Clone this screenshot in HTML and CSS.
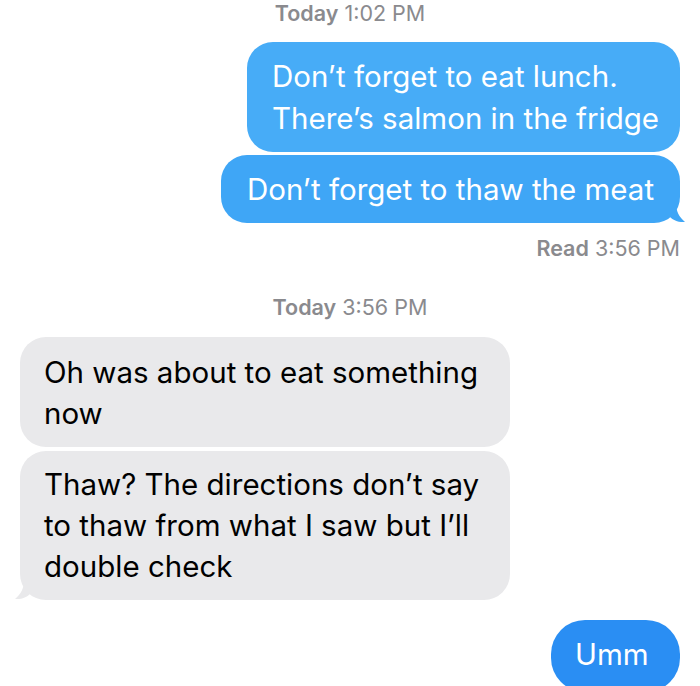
FILE: index.html
```html
<!DOCTYPE html>
<html>
<head>
<meta charset="utf-8">
<link rel="stylesheet" href="styles.css">
</head>
<body>
<div class="thread">
  <div class="stamp stamp-top"><b>Today</b> 1:02 PM</div>

  <div class="bubble out out-1">Don’t forget to eat lunch.<br>There’s salmon in the fridge</div>
  <div class="bubble out out-2">Don’t forget to thaw the meat
    <svg class="tail tail-out" width="20" height="20" viewBox="0 0 20 20"><path d="M0 0 L6 0 C6 8 9 14 15 19 C8 19.5 3 17 0 14 Z" fill="#3fa6f6"/></svg>
  </div>

  <div class="read"><b>Read</b> 3:56 PM</div>

  <div class="stamp stamp-mid"><b>Today</b> 3:56 PM</div>

  <div class="bubble in in-1">Oh was about to eat something<br>now</div>
  <div class="bubble in in-2">Thaw? The directions don’t say<br>to thaw from what I saw but I’ll<br>double check
    <svg class="tail tail-in" width="20" height="20" viewBox="0 0 20 20"><path d="M20 0 L14 0 C14 8 11 14 5 19 C12 19.5 17 17 20 14 Z" fill="#e9e9eb"/></svg>
  </div>

  <div class="bubble out out-3">Umm</div>
</div>
</body>
</html>
```

FILE: styles.css
```css
html, body {
  margin: 0;
  padding: 0;
  background: #ffffff;
}

body {
  width: 700px;
  height: 686px;
  overflow: hidden;
  font-family: "Inter", "Roboto", "Liberation Sans", sans-serif;
}

.thread {
  display: flex;
  flex-direction: column;
  padding: 0 20px;
}

.stamp {
  align-self: center;
  color: #8a8a8e;
  font-size: 21.5px;
  line-height: 24px;
}

.stamp b, .read b {
  font-weight: 600;
}

.stamp-top {
  line-height: 26px;
}

.bubble {
  position: relative;
  box-sizing: border-box;
  font-size: 29.5px;
  white-space: nowrap;
}

.out {
  align-self: flex-end;
  color: #ffffff;
  line-height: 42px;
  padding: 13px 0 13px 25px;
  border-radius: 26px;
}

.out-1 {
  margin-top: 16px;
  width: 433px;
  height: 110px;
  background: #47acf7;
}

.out-2 {
  margin-top: 3px;
  width: 459px;
  height: 68px;
  padding-left: 26px;
  background: #3fa6f6;
}

.out-3 {
  margin-top: 20px;
  width: 129px;
  background: #2a8ef3;
  padding-left: 24px;
  border-radius: 34px;
  height: 72px;
}

.tail {
  position: absolute;
  bottom: 0;
}

.tail-out {
  right: -10px;
}

.tail-in {
  left: -10px;
}

.read {
  align-self: flex-end;
  color: #8a8a8e;
  font-size: 21.5px;
  line-height: 24px;
  margin-top: 13px;
}

.stamp-mid {
  margin-top: 35px;
}

.in {
  align-self: flex-start;
  width: 490px;
  color: #000000;
  background: #e9e9eb;
  line-height: 41px;
  padding: 13px 0 13px 24px;
  border-radius: 26px;
}

.in-1 {
  margin-top: 18px;
  height: 110px;
  padding-top: 15px;
}

.in-2 {
  margin-top: 4px;
  height: 149px;
  padding-top: 13px;
}
```
